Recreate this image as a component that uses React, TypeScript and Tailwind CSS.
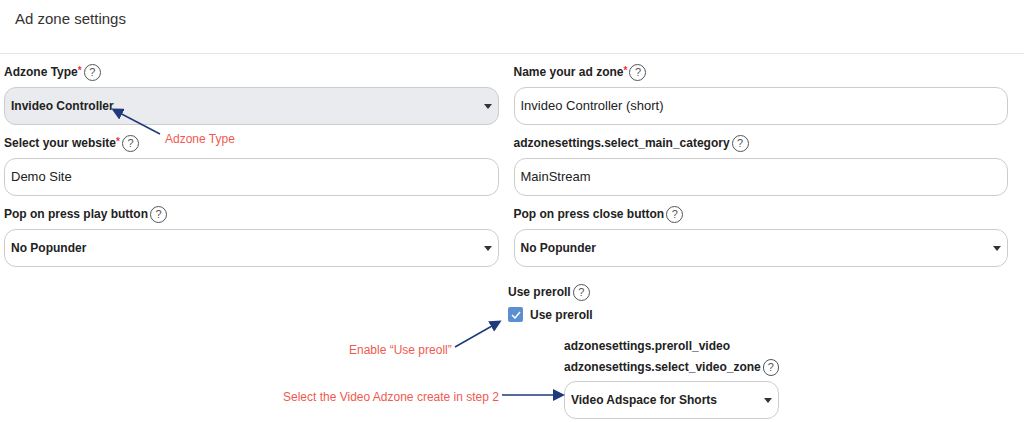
const Q = () => (
  <span className="inline-flex items-center justify-center w-[17px] h-[17px] rounded-full border border-[#555] text-[11px] text-[#555] font-normal ml-[2px] leading-none">?</span>
);
const Caret = () => (
  <svg width="8" height="5" viewBox="0 0 8 5"><path d="M0 0h8L4 5z" fill="#333" /></svg>
);
const Label = ({ t, req }: { t: string; req?: boolean }) => (
  <div className="flex items-center h-[20px] text-[12px] font-bold text-[#222]">
    {t}
    {req && <span className="text-[#e33] text-[10px] self-start mt-[1px]">*</span>}
    <Q />
  </div>
);
const Input = ({ v }: { v: string }) => (
  <div className="mt-[5px] h-[38px] rounded-[12px] border border-[#ccc] bg-white flex items-center px-[6px] text-[13px] text-[#222]">{v}</div>
);
const Select = ({ v, gray }: { v: string; gray?: boolean }) => (
  <div className={`mt-[5px] h-[38px] rounded-[12px] border border-[#ccc] flex items-center justify-between px-[6px] text-[12px] font-bold text-[#222] ${gray ? "bg-[#e9ebee]" : "bg-white"}`}>
    <span>{v}</span>
    <Caret />
  </div>
);
export default function App() {
  return (
    <div className="relative w-[1024px] h-[422px] bg-white overflow-hidden" style={{ fontFamily: "'Liberation Sans', Arial, sans-serif" }}>
      <div className="h-[54px] border-b border-[#e3e3ea] pl-[15px] pt-[8px] text-[15px] text-[#333]">Ad zone settings</div>
      <div className="grid grid-cols-2 gap-x-[15px] px-[4px] pr-[16px] pt-[8px] gap-y-[8px]">
        <div><Label t="Adzone Type" req /><Select v="Invideo Controller" gray /></div>
        <div><Label t="Name your ad zone" req /><Input v="Invideo Controller (short)" /></div>
        <div><Label t="Select your website" req /><Input v="Demo Site" /></div>
        <div><Label t="adzonesettings.select_main_category" /><Input v="MainStream" /></div>
        <div><Label t="Pop on press play button" /><Select v="No Popunder" /></div>
        <div><Label t="Pop on press close button" /><Select v="No Popunder" /></div>
      </div>
      <div className="ml-[508px] mt-[15px]">
        <Label t="Use preroll" />
        <div className="flex items-start mt-[4px] text-[12px] font-bold text-[#222]">
          <span className="w-[15px] h-[15px] rounded-[2px] bg-[#5b8fcf] flex items-center justify-center mt-[1px]">
            <svg width="10" height="8" viewBox="0 0 10 8"><path d="M1 4l3 3 5-6" stroke="#fff" strokeWidth="1.5" fill="none" /></svg>
          </span>
          <span className="ml-[7px]">Use preroll</span>
        </div>
        <div className="ml-[56px] mt-[12px] w-[215px]">
          <div className="h-[20px] flex items-center text-[12px] font-bold text-[#222]">adzonesettings.preroll_video</div>
          <div className="mt-[1px]"><Label t="adzonesettings.select_video_zone" /></div>
          <div className="-mt-[1px]"><Select v="Video Adspace for Shorts" /></div>
        </div>
      </div>
      <span className="absolute left-[165px] top-[130px] text-[12px] text-[#f05a4f]">Adzone Type</span>
      <span className="absolute left-[349px] top-[341px] text-[12px] text-[#f05a4f]">Enable “Use preoll”</span>
      <span className="absolute left-[283px] top-[388px] text-[12px] text-[#f05a4f]">Select the Video Adzone create in step 2</span>
      <svg className="absolute left-0 top-0" width="1024" height="422">
        <defs>
          <marker id="a" markerWidth="8" markerHeight="8" refX="6" refY="4" orient="auto"><path d="M0 0L8 4L0 8z" fill="#1f3a7a" /></marker>
        </defs>
        <line x1="160" y1="134" x2="114" y2="110" stroke="#1f3a7a" strokeWidth="1.5" markerEnd="url(#a)" />
        <line x1="455" y1="347" x2="499" y2="322" stroke="#1f3a7a" strokeWidth="1.5" markerEnd="url(#a)" />
        <line x1="502" y1="395" x2="562" y2="395" stroke="#1f3a7a" strokeWidth="1.5" markerEnd="url(#a)" />
      </svg>
    </div>
  );
}
